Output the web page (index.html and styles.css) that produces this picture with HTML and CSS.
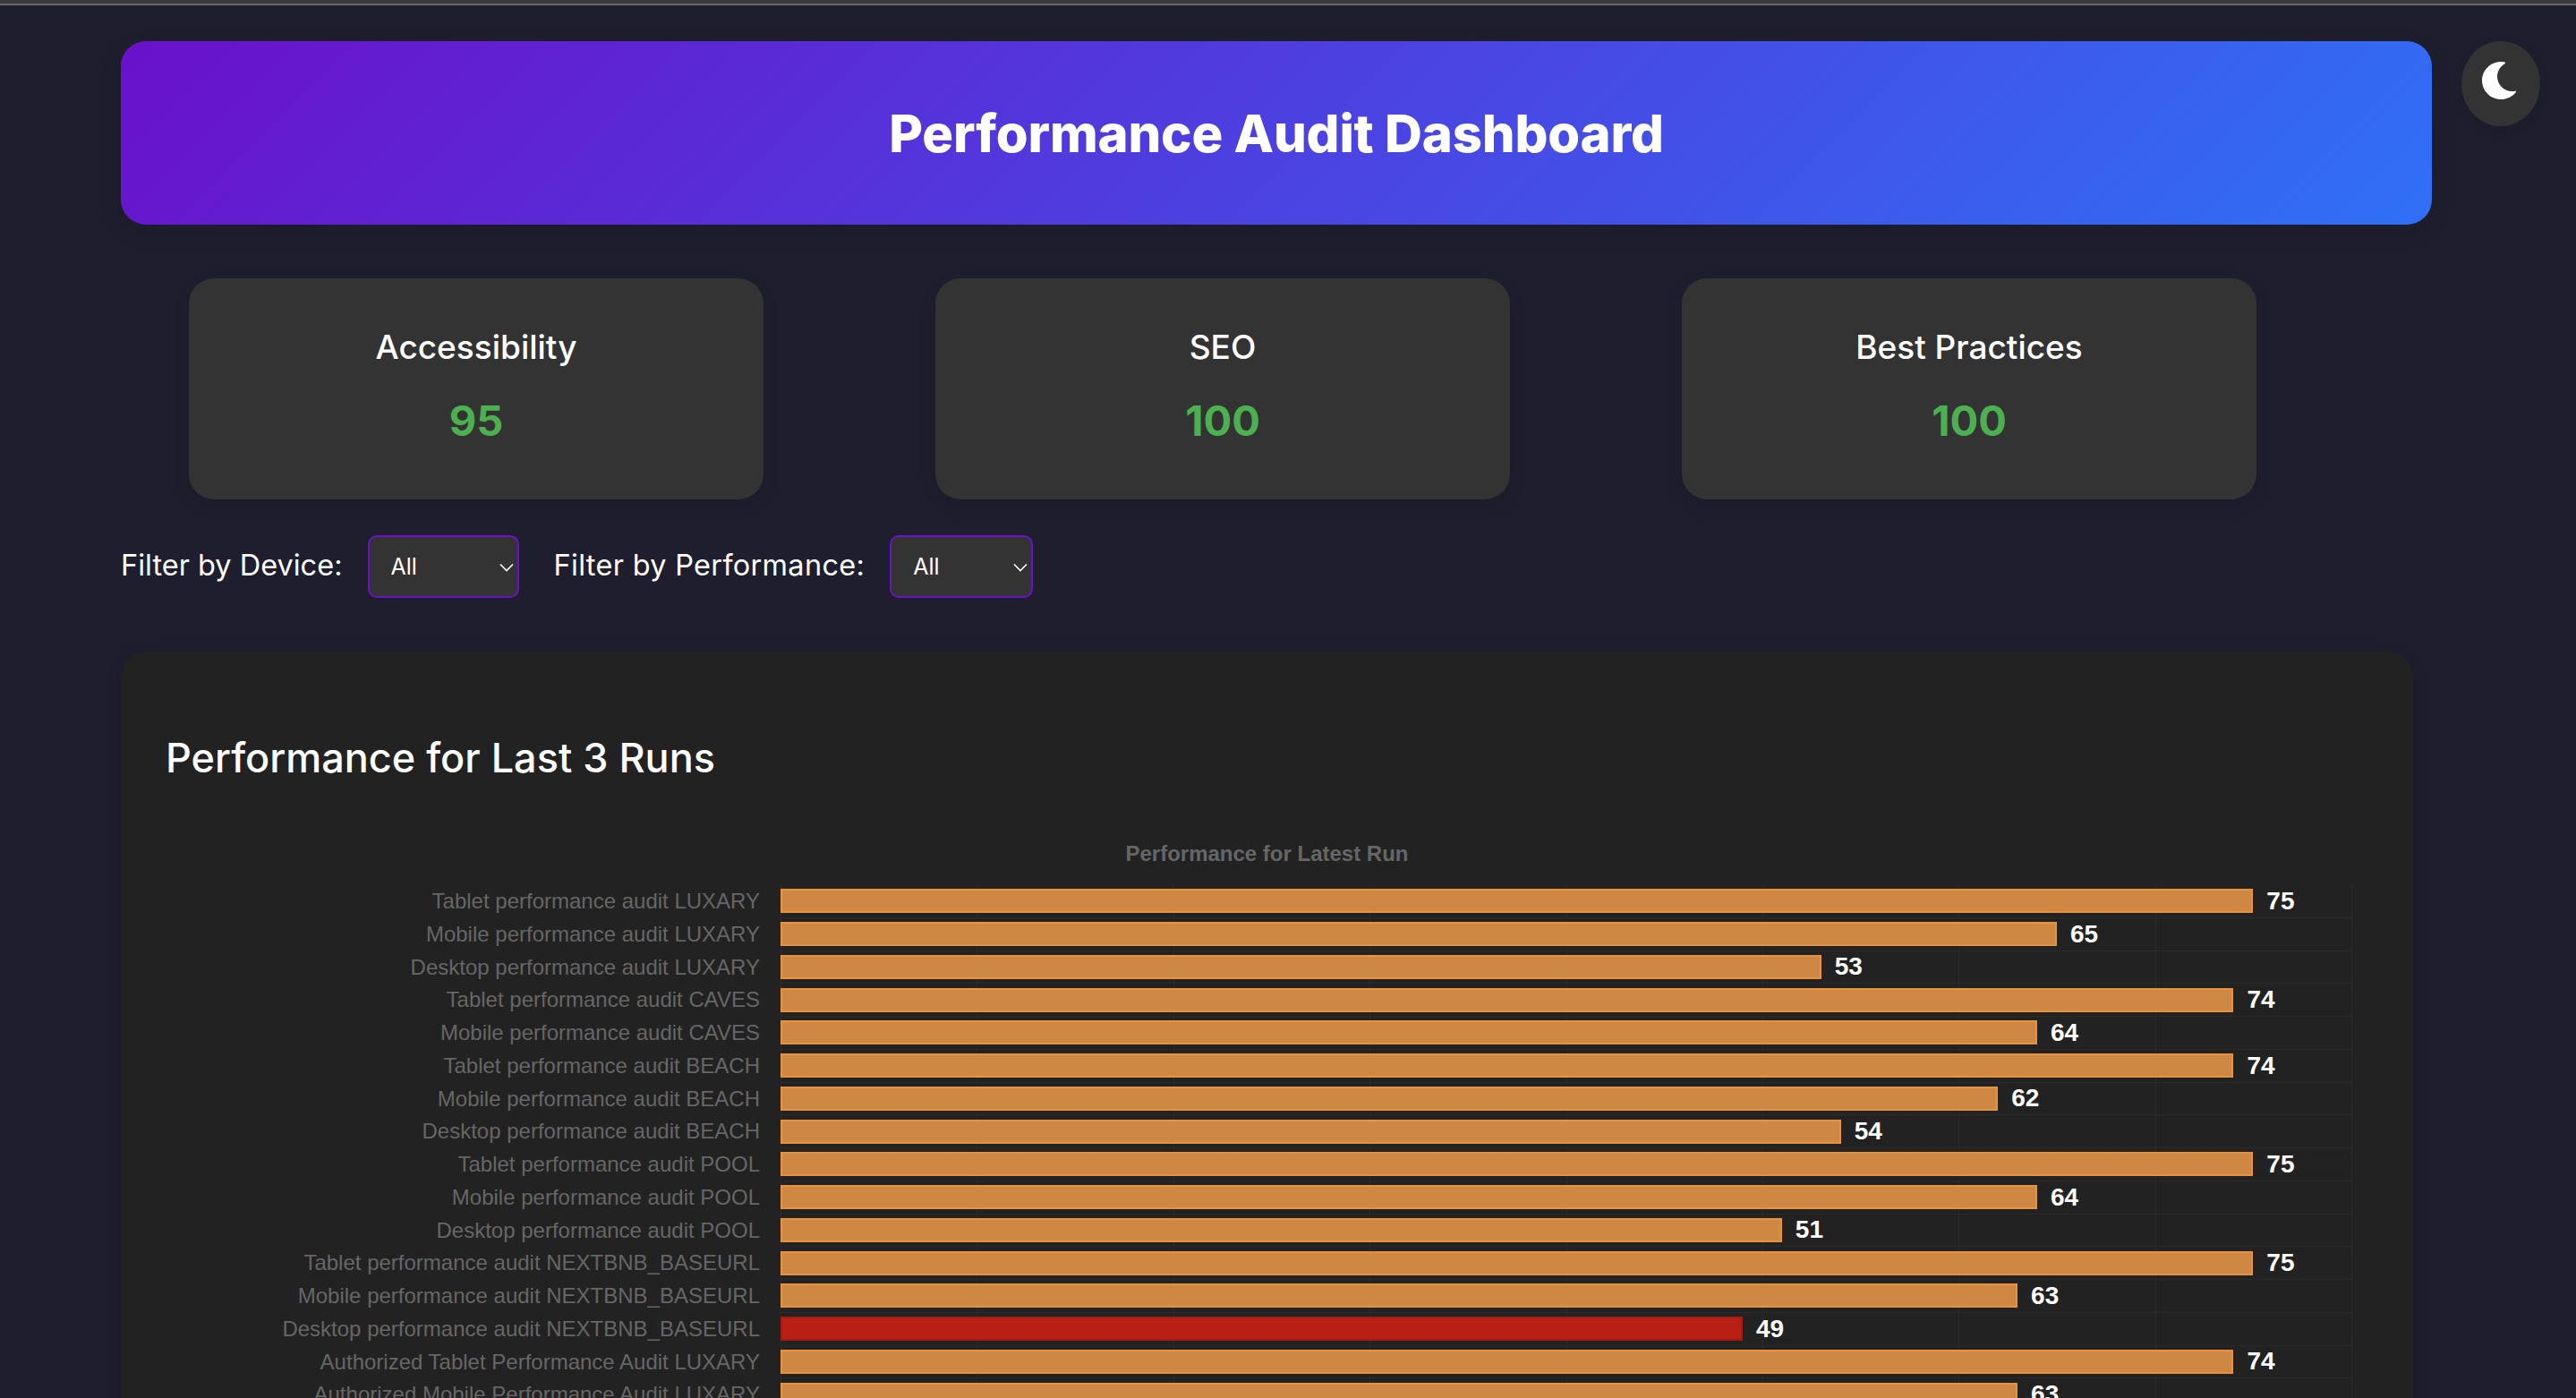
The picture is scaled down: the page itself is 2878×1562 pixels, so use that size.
FILE: index.html
```html
<!DOCTYPE html>
<html lang="en">
<head>
  <meta charset="UTF-8">
  <title>Performance Audit Dashboard</title>
  <link rel="stylesheet" href="styles.css">
</head>
<body>
  <div class="top-strip"></div>

  <button class="theme-toggle" type="button" aria-label="Toggle theme">
    <svg class="moon" viewBox="27 0 458 512" preserveAspectRatio="none">
      <path fill="#fff" d="M283.211 512c78.962 0 151.079-35.925 198.857-94.792 7.068-8.708-.639-21.43-11.562-19.35-124.203 23.654-238.262-71.576-238.262-196.954 0-72.222 38.662-138.635 101.498-174.394 9.686-5.512 7.25-20.197-3.756-22.23A258.156 258.156 0 0 0 283.211 0c-141.309 0-256 114.511-256 256 0 141.309 114.511 256 256 256z"/>
    </svg>
  </button>

  <main class="container">
    <header class="page-header">
      <h1>Performance Audit Dashboard</h1>
    </header>

    <section class="summary">
      <div class="summary-card">
        <h3>Accessibility</h3>
        <div class="score">95</div>
      </div>
      <div class="summary-card">
        <h3>SEO</h3>
        <div class="score">100</div>
      </div>
      <div class="summary-card">
        <h3>Best Practices</h3>
        <div class="score">100</div>
      </div>
    </section>

    <section class="filters">
      <label for="deviceFilter">Filter by Device:</label>
      <div class="select-wrap select-device">
        <select id="deviceFilter">
          <option>All</option>
        </select>
        <svg class="chevron" viewBox="0 0 16 10"><path d="M1 1.5l7 7 7-7" fill="none" stroke="#fff" stroke-width="1.6"/></svg>
      </div>
      <label class="label-performance" for="performanceFilter">Filter by Performance:</label>
      <div class="select-wrap select-performance">
        <select id="performanceFilter">
          <option>All</option>
        </select>
        <svg class="chevron" viewBox="0 0 16 10"><path d="M1 1.5l7 7 7-7" fill="none" stroke="#fff" stroke-width="1.6"/></svg>
      </div>
    </section>

    <section class="chart-card">
      <h2>Performance for Last 3 Runs</h2>
      <div class="chart-title">Performance for Latest Run</div>
      <div class="chart">
        <div class="row"><div class="row-label">Tablet performance audit LUXARY</div><div class="plot"><div class="bar" style="width:93.75%"></div><span class="value">75</span></div></div>
        <div class="row"><div class="row-label">Mobile performance audit LUXARY</div><div class="plot"><div class="bar" style="width:81.25%"></div><span class="value">65</span></div></div>
        <div class="row"><div class="row-label">Desktop performance audit LUXARY</div><div class="plot"><div class="bar" style="width:66.25%"></div><span class="value">53</span></div></div>
        <div class="row"><div class="row-label">Tablet performance audit CAVES</div><div class="plot"><div class="bar" style="width:92.5%"></div><span class="value">74</span></div></div>
        <div class="row"><div class="row-label">Mobile performance audit CAVES</div><div class="plot"><div class="bar" style="width:80%"></div><span class="value">64</span></div></div>
        <div class="row"><div class="row-label">Tablet performance audit BEACH</div><div class="plot"><div class="bar" style="width:92.5%"></div><span class="value">74</span></div></div>
        <div class="row"><div class="row-label">Mobile performance audit BEACH</div><div class="plot"><div class="bar" style="width:77.5%"></div><span class="value">62</span></div></div>
        <div class="row"><div class="row-label">Desktop performance audit BEACH</div><div class="plot"><div class="bar" style="width:67.5%"></div><span class="value">54</span></div></div>
        <div class="row"><div class="row-label">Tablet performance audit POOL</div><div class="plot"><div class="bar" style="width:93.75%"></div><span class="value">75</span></div></div>
        <div class="row"><div class="row-label">Mobile performance audit POOL</div><div class="plot"><div class="bar" style="width:80%"></div><span class="value">64</span></div></div>
        <div class="row"><div class="row-label">Desktop performance audit POOL</div><div class="plot"><div class="bar" style="width:63.75%"></div><span class="value">51</span></div></div>
        <div class="row"><div class="row-label">Tablet performance audit NEXTBNB_BASEURL</div><div class="plot"><div class="bar" style="width:93.75%"></div><span class="value">75</span></div></div>
        <div class="row"><div class="row-label">Mobile performance audit NEXTBNB_BASEURL</div><div class="plot"><div class="bar" style="width:78.75%"></div><span class="value">63</span></div></div>
        <div class="row"><div class="row-label">Desktop performance audit NEXTBNB_BASEURL</div><div class="plot"><div class="bar bar-low" style="width:61.25%"></div><span class="value">49</span></div></div>
        <div class="row"><div class="row-label">Authorized Tablet Performance Audit LUXARY</div><div class="plot"><div class="bar" style="width:92.5%"></div><span class="value">74</span></div></div>
        <div class="row"><div class="row-label">Authorized Mobile Performance Audit LUXARY</div><div class="plot"><div class="bar" style="width:78.75%"></div><span class="value">63</span></div></div>
      </div>
    </section>
  </main>
</body>
</html>
```

FILE: styles.css
```css
html, body {
  margin: 0;
  padding: 0;
  height: 100%;
  overflow: hidden;
  background: #1e1e2e;
  color: #fff;
  font-family: Inter, "Noto Sans", sans-serif;
}

.top-strip {
  height: 4px;
  background: #3a3a3a;
  border-bottom: 2px solid #666;
}

.theme-toggle {
  position: fixed;
  top: 46px;
  right: 40px;
  width: 88px;
  height: 95px;
  padding: 0 4px 7px 0;
  display: flex;
  align-items: center;
  justify-content: center;
  border: none;
  border-radius: 50%;
  background: #333;
  box-shadow: 0 4px 12px rgba(0, 0, 0, 0.1);
}

.moon {
  width: 38px;
  height: 42px;
}

.container {
  width: 2582px;
  margin-left: 135px;
  padding-top: 40px;
}

.page-header {
  height: 205px;
  display: flex;
  align-items: center;
  justify-content: center;
  border-radius: 28px;
  background: linear-gradient(135deg, #6a11cb, #2f70f6);
  box-shadow: 0 8px 24px rgba(0, 0, 0, 0.1);
}

.page-header h1 {
  margin: 0;
  font-size: 58px;
  font-weight: 800;
  letter-spacing: -0.2px;
}

.summary {
  display: grid;
  grid-template-columns: repeat(3, 642px);
  column-gap: 192px;
  padding-left: 76px;
  margin-top: 60px;
}

.summary-card {
  height: 247px;
  box-sizing: border-box;
  padding-top: 52px;
  text-align: center;
  border-radius: 28px;
  background: #333;
  box-shadow: 0 6px 18px rgba(0, 0, 0, 0.1);
}

.summary-card h3 {
  margin: 0;
  font-size: 37px;
  line-height: 50px;
  font-weight: 500;
}

.score {
  margin-top: 27px;
  font-size: 47px;
  line-height: 60px;
  font-weight: 700;
  color: #4caf50;
}

/* filters row */
.filters {
  display: flex;
  align-items: center;
  height: 70px;
  margin-top: 40px;
}

.filters label {
  font-size: 32.5px;
  margin-right: 28px;
  position: relative;
  top: -2px;
}

.filters .label-performance {
  margin-left: 39px;
  letter-spacing: 0.3px;
}

.select-wrap {
  position: relative;
  height: 70px;
}

.select-device {
  width: 169px;
}

.select-performance {
  width: 160px;
}

.select-wrap select {
  width: 100%;
  height: 100%;
  box-sizing: border-box;
  padding: 0 0 0 24px;
  appearance: none;
  border: 2px solid #6a11cb;
  border-radius: 10px;
  background: #333;
  color: #fff;
  font-family: Inter, sans-serif;
  font-size: 25px;
  outline: none;
}

.chevron {
  position: absolute;
  right: 6px;
  top: 31px;
  width: 16px;
  height: 10px;
}

.chart-card {
  width: 2561px;
  box-sizing: border-box;
  margin-top: 60px;
  padding: 93px 51px 60px;
  border-radius: 28px;
  background: #222;
  box-shadow: 0 6px 18px rgba(0, 0, 0, 0.1);
}

.chart-card h2 {
  margin: 0 0 0 -1px;
  font-size: 45px;
  line-height: 52px;
  font-weight: 500;
}

.chart-title {
  margin-top: 67px;
  text-align: center;
  font-family: "Liberation Sans", Arial, sans-serif;
  font-size: 24px;
  line-height: 28px;
  font-weight: 700;
  color: #666;
}

.chart {
  margin-top: 21px;
  font-family: "Liberation Sans", Arial, sans-serif;
}

.row {
  display: flex;
  height: 36.75px;
}

.row-label {
  flex: 0 0 686px;
  box-sizing: border-box;
  padding-right: 23px;
  text-align: right;
  font-size: 24px;
  line-height: 36px;
  color: #666;
  white-space: nowrap;
}

.plot {
  flex: 0 0 1756px;
  box-sizing: border-box;
  display: flex;
  align-items: center;
  gap: 15px;
  border-bottom: 1px solid #2a2a2a;
  border-right: 1px solid #2a2a2a;
  background: repeating-linear-gradient(to right, #2a2a2a 0, #2a2a2a 1px, transparent 1px, transparent 219.4px);
}

.bar {
  height: 27px;
  box-sizing: border-box;
  flex: none;
  background: #cf8843;
  border: 2px solid #e8913f;
}

.bar-low {
  background: #b91f13;
  border-color: #a01c12;
}

.value {
  flex: none;
  font-size: 28px;
  font-weight: 700;
  color: #fff;
}
```
